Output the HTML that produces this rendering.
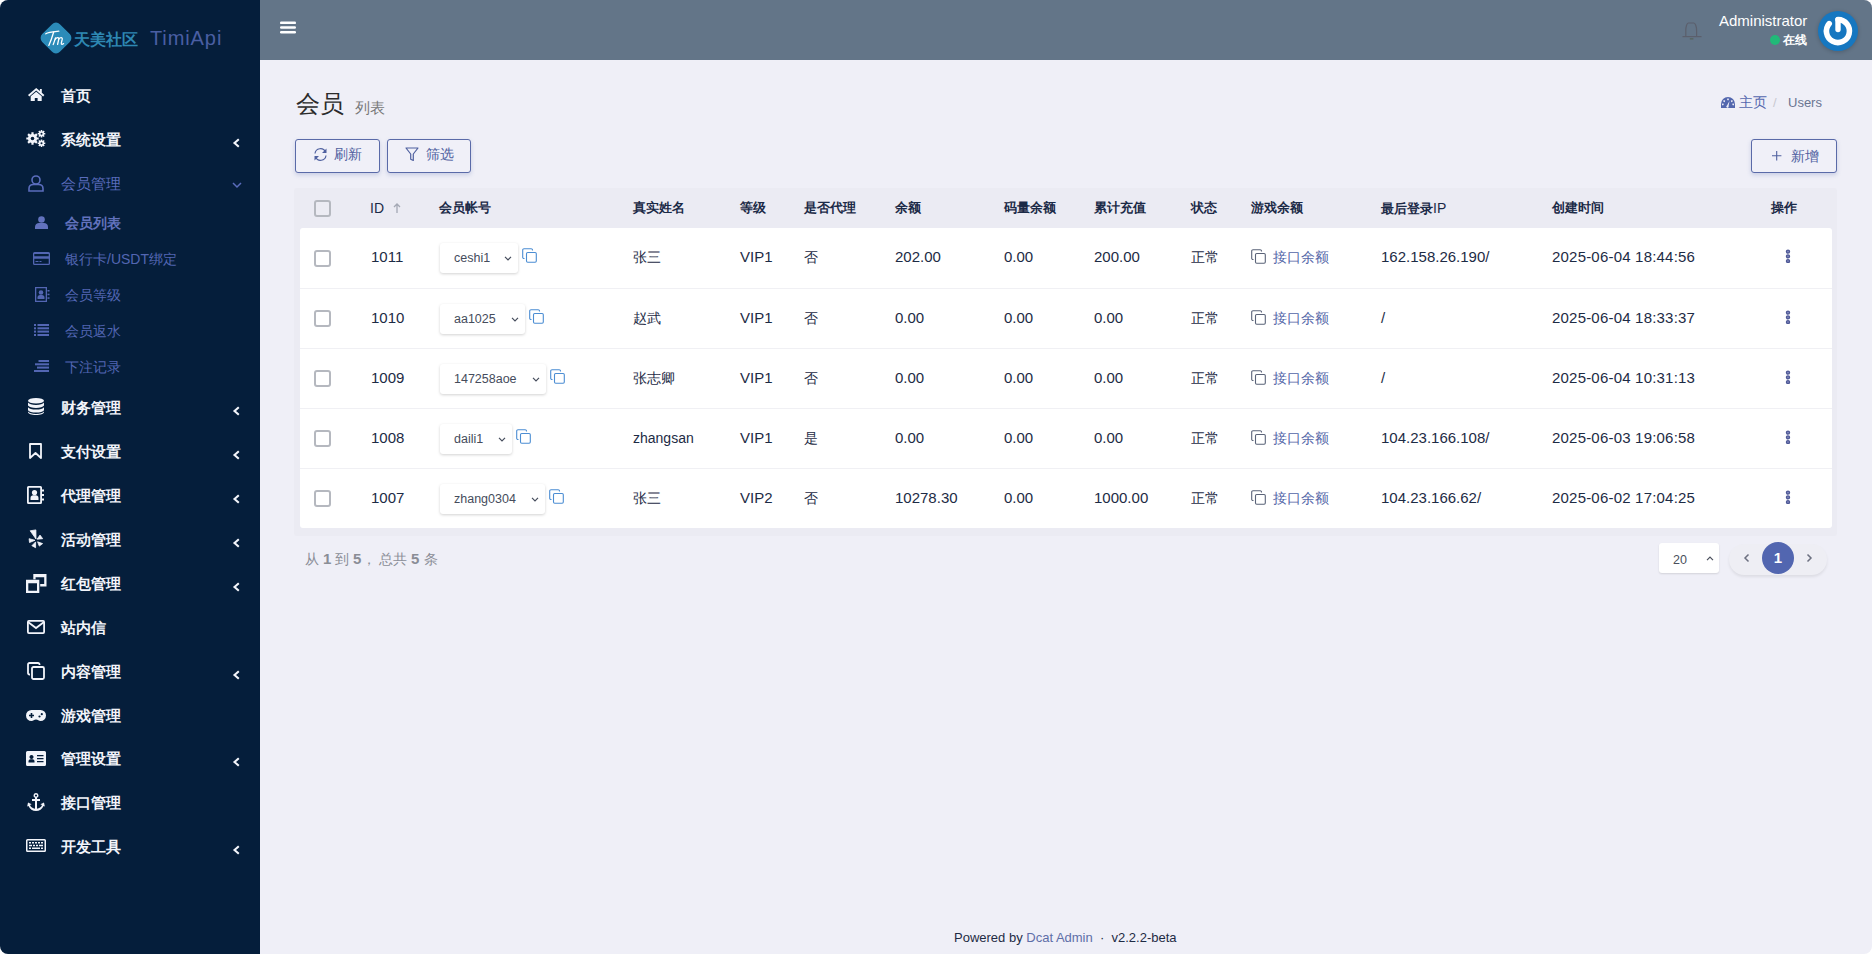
<!DOCTYPE html>
<html><head><meta charset="utf-8">
<style>
*{box-sizing:border-box;margin:0;padding:0}
html,body{width:1872px;height:954px;overflow:hidden;background:#fff}
body{font-family:"Liberation Sans",sans-serif;position:relative}
#win{position:absolute;left:0;top:0;width:1872px;height:954px;border-radius:8px;overflow:hidden;background:#efeff7}
#side{position:absolute;left:0;top:0;width:260px;height:954px;background:#051e3b}
#hdr{position:absolute;left:260px;top:0;width:1612px;height:60px;background:#637588}
.a{position:absolute;white-space:nowrap}
svg.a{overflow:visible}
.mi{position:absolute;left:0;width:260px;height:44px;color:#f2f4fa;font-size:15px;font-weight:700}
.mi .t{position:absolute;left:61px;top:1px;line-height:44px}
.mi svg{position:absolute;overflow:visible}
.mi .ar{left:232px;top:21px}
.sub{position:absolute;left:0;width:260px;height:36px;color:#5366b3;font-size:14px;font-weight:400}
.sub .t{position:absolute;left:65px;top:1px;line-height:36px}
.sub svg{position:absolute;overflow:visible}
.btn{position:absolute;height:34px;border:1px solid #5a6aa8;border-radius:3px;box-shadow:0 2px 4px rgba(88,108,177,.25);color:#4f609f;font-size:14px;background:#f0f0f8}
.btn span{position:absolute;top:-1px;line-height:31px}
.btn svg{position:absolute}
#tbl{position:absolute;left:294px;top:188px;width:1543px;height:348px;background:#ebebf3;border-radius:3px}
.th{position:absolute;top:200px;font-size:13px;line-height:16px;color:#1b2a47;font-weight:bold}
.row{position:absolute;left:300px;width:1532px;height:60px;background:#fff;border-top:1px solid #f0f0f4}
.c{position:absolute;font-size:14px;line-height:18px;color:#1d2b45;white-space:nowrap;top:20px}
.n{font-size:15px;top:20px}
.cb{position:absolute;left:14px;top:21px;width:17px;height:17px;border:2px solid #b5b8bf;border-radius:3px;background:#fff}
.sel{position:absolute;left:140px;top:15px;height:30px;border-radius:3px;background:#fff;box-shadow:0 1px 3px rgba(0,0,0,.18);font-size:12.5px;color:#454c5c}
.sel span{position:absolute;left:14px;top:7px;line-height:16px}
.sel svg{position:absolute;top:13px}
.cp{position:absolute;top:20px}
.gb{position:absolute;left:951px;top:20px;font-size:14px;color:#5366a8;line-height:18px}
.dots{position:absolute;left:1485px;top:21px}
</style></head><body>
<div id="win">
<div id="side">
  <svg class="a" style="left:40px;top:22px" width="32" height="32" viewBox="0 0 32 32">
    <rect x="3.5" y="3.5" width="25" height="25" rx="5.5" transform="rotate(45 16 16)" fill="#2b8bb9"/>
    <g stroke="#fff" stroke-width="1.3" fill="none" stroke-linecap="round" stroke-linejoin="round"><path d="M5.8 11.8C8.5 9.8 14 9.6 18.8 9.2"/><path d="M13.6 10.2C12.2 15 10.6 19.5 8.8 23.4"/><path d="M13.2 22.6C14.2 20 14.9 17.5 15.6 15.8"/><path d="M15.3 17.2C16.8 15.2 19.2 14.8 18.7 17.3L17.6 22.3"/><path d="M18.6 17.3C20.1 15.2 22.7 14.9 22.2 17.4L21.3 21.2C21.1 22.6 22.2 22.9 23.6 21.6"/></g>
  </svg>
  <div class="a" style="left:74px;top:30px;font-size:16px;line-height:20px;color:#2e88b3;font-weight:700">天美社区</div>
  <div class="a" style="left:150px;top:26px;font-size:20px;line-height:24px;color:#4a5ea3;letter-spacing:0.9px">TimiApi</div>

  <div class="mi" style="top:73px"><svg style="left:28px;top:15px" width="17" height="14" viewBox="0 0 17 14"><path fill="#f2f4fa" d="M8.2 0L0 6.9l1.3 1.5L8.2 2.6l6.9 5.8 1.3-1.5L13.8 4.7V1h-1.9v2.1z M2.7 8.3L8.2 3.8l5.5 4.5V13H9.6V10H6.8V13H2.7z"/></svg><span class="t">首页</span></div>
  <div class="mi" style="top:117px"><svg style="left:26px;top:13px" width="20" height="17" viewBox="0 0 20 17"><g fill="#f2f4fa"><circle cx="6.5" cy="8.5" r="4.6"/><g stroke="#f2f4fa" stroke-width="2.2"><path d="M6.5 2.3v12.4M.3 8.5h12.4M2.1 4.1l8.8 8.8M10.9 4.1l-8.8 8.8"/></g><circle cx="15.5" cy="3.8" r="2.6"/><g stroke="#f2f4fa" stroke-width="1.5"><path d="M15.5 0v7.6M11.7 3.8h7.6M12.8 1.1l5.4 5.4M18.2 1.1l-5.4 5.4"/></g><circle cx="15.5" cy="13.2" r="2.6"/><g stroke="#f2f4fa" stroke-width="1.5"><path d="M15.5 9.4V17M11.7 13.2h7.6M12.8 10.5l5.4 5.4M18.2 10.5l-5.4 5.4"/></g></g><g fill="#051e3b"><circle cx="6.5" cy="8.5" r="1.8"/><circle cx="15.5" cy="3.8" r="1"/><circle cx="15.5" cy="13.2" r="1"/></g></svg><span class="t">系统设置</span><svg class="ar" width="9" height="10" viewBox="0 0 9 10"><path d="M6.8 1.2L2.5 5l4.3 3.8" stroke="#f2f4fa" stroke-width="2.1" fill="none"/></svg></div>
  <div class="mi" style="top:161px;color:#5a6cbc;font-weight:400"><svg style="left:28px;top:14px" width="16" height="17" viewBox="0 0 16 17"><g stroke="#5a6cbc" stroke-width="1.6" fill="none"><circle cx="8" cy="5" r="4"/><path d="M1 16v-2.5C1 11 3 9.5 5.5 9.5h5C13 9.5 15 11 15 13.5V16z"/></g></svg><span class="t">会员管理</span><svg class="ar" style="left:232px;top:21px" width="10" height="7" viewBox="0 0 10 7"><path d="M1 1l4 4 4-4" stroke="#5a6cbc" stroke-width="1.5" fill="none"/></svg></div>
  <div class="sub" style="top:204px;color:#6272bd;font-weight:700"><svg style="left:35px;top:12px" width="13" height="13" viewBox="0 0 13 13"><g fill="#6272bd"><circle cx="6.5" cy="3.5" r="3.3"/><path d="M0 13v-2c0-2.5 2-4 4-4h5c2 0 4 1.5 4 4v2z"/></g></svg><span class="t">会员列表</span></div>
  <div class="sub" style="top:240px"><svg style="left:33px;top:12px" width="17" height="13" viewBox="0 0 17 13"><g fill="#5366b3"><path d="M1.5 0h14A1.5 1.5 0 0 1 17 1.5v10A1.5 1.5 0 0 1 15.5 13h-14A1.5 1.5 0 0 1 0 11.5v-10A1.5 1.5 0 0 1 1.5 0zM1.3 2v2.2h14.4V2zm0 4.8v4.9h14.4V6.8zM2.5 9h3v1h-3zm4 0h2v1h-2z"/></g></svg><span class="t">银行卡/USDT绑定</span></div>
  <div class="sub" style="top:276px"><svg style="left:34px;top:11px" width="16" height="15" viewBox="0 0 16 15"><g fill="#5366b3"><path d="M1 0h12v15H1zm1.3 1.3v12.4h9.4V1.3z"/><circle cx="7" cy="5.5" r="2.3"/><path d="M3.5 12v-1.5c0-1.5 1-2.5 2.5-2.5h2c1.5 0 2.5 1 2.5 2.5V12z"/><rect x="13.5" y="3" width="2" height="1.5"/><rect x="13.5" y="6.7" width="2" height="1.5"/><rect x="13.5" y="10.3" width="2" height="1.5"/></g></svg><span class="t">会员等级</span></div>
  <div class="sub" style="top:312px"><svg style="left:34px;top:12px" width="15" height="12" viewBox="0 0 15 12"><g fill="#5366b3"><rect x="0" y="0" width="2" height="2"/><rect x="3.5" y="0" width="11.5" height="2"/><rect x="0" y="3.3" width="2" height="2"/><rect x="3.5" y="3.3" width="11.5" height="2"/><rect x="0" y="6.6" width="2" height="2"/><rect x="3.5" y="6.6" width="11.5" height="2"/><rect x="0" y="10" width="2" height="2"/><rect x="3.5" y="10" width="11.5" height="2"/></g></svg><span class="t">会员返水</span></div>
  <div class="sub" style="top:348px"><svg style="left:34px;top:12px" width="15" height="12" viewBox="0 0 15 12"><g fill="#5366b3"><rect x="4.5" y="0" width="10.5" height="2"/><rect x="1" y="3.3" width="14" height="2"/><rect x="3" y="6.6" width="12" height="2"/><rect x="0" y="10" width="15" height="2"/></g></svg><span class="t">下注记录</span></div>
  <div class="mi" style="top:385px"><svg style="left:28px;top:13px" width="16" height="17" viewBox="0 0 16 17"><g fill="#f2f4fa"><ellipse cx="8" cy="2.8" rx="8" ry="2.8"/><path d="M0 4.6c1 1.6 4 2.4 8 2.4s7-.8 8-2.4v3c-1 1.6-4 2.4-8 2.4S1 9.2 0 7.6z"/><path d="M0 9.2c1 1.6 4 2.4 8 2.4s7-.8 8-2.4v3c-1 1.6-4 2.4-8 2.4S1 13.8 0 12.2z"/><path d="M0 13.6c1 1.6 4 2.4 8 2.4s7-.8 8-2.4v.6c0 1.6-3.6 2.8-8 2.8S0 15.8 0 14.2z"/></g></svg><span class="t">财务管理</span><svg class="ar" width="9" height="10" viewBox="0 0 9 10"><path d="M6.8 1.2L2.5 5l4.3 3.8" stroke="#f2f4fa" stroke-width="2.1" fill="none"/></svg></div>
  <div class="mi" style="top:429px"><svg style="left:29px;top:14px" width="13" height="16" viewBox="0 0 13 16"><path d="M1 1h11v14l-5.5-5L1 15z" stroke="#f2f4fa" stroke-width="1.8" fill="none" stroke-linejoin="round"/></svg><span class="t">支付设置</span><svg class="ar" width="9" height="10" viewBox="0 0 9 10"><path d="M6.8 1.2L2.5 5l4.3 3.8" stroke="#f2f4fa" stroke-width="2.1" fill="none"/></svg></div>
  <div class="mi" style="top:473px"><svg style="left:27px;top:13px" width="17" height="18" viewBox="0 0 17 18"><g fill="#f2f4fa"><path d="M1.5 0h12A1.5 1.5 0 0 1 15 1.5v15a1.5 1.5 0 0 1-1.5 1.5h-12A1.5 1.5 0 0 1 0 16.5v-15A1.5 1.5 0 0 1 1.5 0zm.3 1.8v14.4h11.4V1.8z"/><circle cx="7.5" cy="6.5" r="2.6"/><path d="M3.5 14v-2c0-1.6 1.2-2.7 2.8-2.7h2.4c1.6 0 2.8 1.1 2.8 2.7v2z"/><rect x="15" y="3.5" width="2" height="2"/><rect x="15" y="8" width="2" height="2"/><rect x="15" y="12.5" width="2" height="2"/></g></svg><span class="t">代理管理</span><svg class="ar" width="9" height="10" viewBox="0 0 9 10"><path d="M6.8 1.2L2.5 5l4.3 3.8" stroke="#f2f4fa" stroke-width="2.1" fill="none"/></svg></div>
  <div class="mi" style="top:517px"><svg style="left:24px;top:9px" width="26" height="26" viewBox="0 0 26 26"><g fill="#f2f4fa" stroke="#f2f4fa" stroke-width="0.8" stroke-linejoin="round"><path d="M6.2 4.8L11.9 3.9 12 13z"/><path d="M13.1 13.2L16 9.1 18.7 12.7z"/><path d="M11 14.3L5.1 12.7 5.5 16.5z"/><path d="M11.6 15.9L7.9 19.7 11.6 21.7z"/><path d="M13.6 15.8L18.6 17.6 15.3 20.1z"/></g></svg><span class="t">活动管理</span><svg class="ar" width="9" height="10" viewBox="0 0 9 10"><path d="M6.8 1.2L2.5 5l4.3 3.8" stroke="#f2f4fa" stroke-width="2.1" fill="none"/></svg></div>
  <div class="mi" style="top:561px"><svg style="left:26px;top:13px" width="21" height="19" viewBox="0 0 21 19"><path fill="#f2f4fa" fill-rule="evenodd" d="M7.3 0h13.2v12.5H14.2v-2.4h4V3.2H9.6v2.1H7.3z M0 5.8h13.3V19H0z M2.3 9.3h8.7v7.4H2.3z"/></svg><span class="t">红包管理</span><svg class="ar" width="9" height="10" viewBox="0 0 9 10"><path d="M6.8 1.2L2.5 5l4.3 3.8" stroke="#f2f4fa" stroke-width="2.1" fill="none"/></svg></div>
  <div class="mi" style="top:605px"><svg style="left:27px;top:15px" width="18" height="14" viewBox="0 0 18 14"><g stroke="#f2f4fa" stroke-width="1.8" fill="none"><rect x="0.9" y="0.9" width="16.2" height="12.2" rx="1"/><path d="M1 2l8 6 8-6"/></g></svg><span class="t">站内信</span></div>
  <div class="mi" style="top:649px"><svg style="left:27px;top:13px" width="18" height="18" viewBox="0 0 18 18"><g stroke="#f2f4fa" stroke-width="1.8" fill="none"><rect x="5" y="5" width="12" height="12" rx="1.5"/><path d="M3 12.5H2.5A1.5 1.5 0 0 1 1 11V2.5A1.5 1.5 0 0 1 2.5 1H11a1.5 1.5 0 0 1 1.5 1.5V3"/></g></svg><span class="t">内容管理</span><svg class="ar" width="9" height="10" viewBox="0 0 9 10"><path d="M6.8 1.2L2.5 5l4.3 3.8" stroke="#f2f4fa" stroke-width="2.1" fill="none"/></svg></div>
  <div class="mi" style="top:693px"><svg style="left:26px;top:17px" width="20" height="12" viewBox="0 0 20 12"><path fill="#f2f4fa" d="M5.5 0h9a5.5 5.5 0 0 1 0 11c-1.8 0-2.6-1.4-4.5-1.4S7.3 11 5.5 11a5.5 5.5 0 0 1 0-11zM3 4.7v1.6h1.7V8h1.6V6.3H8V4.7H6.3V3H4.7v1.7z"/><g fill="#051e3b"><circle cx="13.5" cy="6.5" r="1.1"/><circle cx="15.8" cy="4.2" r="1.1"/></g></svg><span class="t">游戏管理</span></div>
  <div class="mi" style="top:736px"><svg style="left:26px;top:15px" width="20" height="15" viewBox="0 0 20 15"><path fill="#f2f4fa" d="M1.5 0h17A1.5 1.5 0 0 1 20 1.5v12a1.5 1.5 0 0 1-1.5 1.5h-17A1.5 1.5 0 0 1 0 13.5v-12A1.5 1.5 0 0 1 1.5 0zM5.5 4a2 2 0 1 0 .01 0zM2.5 11.5h6v-1.3c0-1.2-1-2-2-2h-2c-1 0-2 .8-2 2zM11 4v1.3h6.5V4zm0 3v1.3h6.5V7zm0 3v1.3h6.5V10z"/></svg><span class="t">管理设置</span><svg class="ar" width="9" height="10" viewBox="0 0 9 10"><path d="M6.8 1.2L2.5 5l4.3 3.8" stroke="#f2f4fa" stroke-width="2.1" fill="none"/></svg></div>
  <div class="mi" style="top:780px"><svg style="left:27px;top:13px" width="18" height="18" viewBox="0 0 18 18"><g fill="#f2f4fa"><path d="M9 0a2.5 2.5 0 0 1 1 4.8V6h3v2h-3v7.8c2.2-.3 4.3-1.7 5-3.8l-1.6-.8L17 9.5l.8 4-1.3-.6C15.3 15.9 12.3 18 9 18s-6.3-2.1-7.5-5.1L.2 13.5l.8-4 3.6 1.7-1.6.8c.7 2.1 2.8 3.5 5 3.8V8H5V6h3V4.8A2.5 2.5 0 0 1 9 0zm0 1.4a1.1 1.1 0 1 0 .01 0z"/></g></svg><span class="t">接口管理</span></div>
  <div class="mi" style="top:824px"><svg style="left:26px;top:15px" width="20" height="13" viewBox="0 0 20 13"><path fill="#f2f4fa" d="M1.5 0h17A1.5 1.5 0 0 1 20 1.5v10a1.5 1.5 0 0 1-1.5 1.5h-17A1.5 1.5 0 0 1 0 11.5v-10A1.5 1.5 0 0 1 1.5 0zM1.5 1.5v10h17v-10zM3 3h2v1.6H3zm3 0h2v1.6H6zm3 0h2v1.6H9zm3 0h2v1.6h-2zm3 0h2v1.6h-2zM3 5.7h3v1.6H3zm4 0h2v1.6H7zm3 0h2v1.6h-2zm3 0h4v1.6h-4zM3 8.4h2V10H3zm3 0h8V10H6zm9 0h2V10h-2z"/></svg><span class="t">开发工具</span><svg class="ar" width="9" height="10" viewBox="0 0 9 10"><path d="M6.8 1.2L2.5 5l4.3 3.8" stroke="#f2f4fa" stroke-width="2.1" fill="none"/></svg></div>
</div>

<div id="hdr">
  <svg class="a" style="left:20px;top:21px" width="16" height="13" viewBox="0 0 16 13"><g fill="#fff"><rect x="0" y="0.5" width="16" height="2.6" rx="1.2"/><rect x="0" y="5.2" width="16" height="2.6" rx="1.2"/><rect x="0" y="9.9" width="16" height="2.6" rx="1.2"/></g></svg>
  <svg class="a" style="left:1422px;top:22px" width="20" height="20" viewBox="0 0 20 20"><g stroke="#5b5f6c" stroke-width="1.2" fill="none"><path d="M3.8 14.5V8.5C3.8 4.5 5 1 6.3 1H11.9C13.2 1 14.6 4.5 14.6 8.5V14.5"/><path d="M0.5 14.6h19"/></g><path d="M7.8 16.2h3.6v1.3H7.8z" fill="#56645c"/></svg>
  <div class="a" style="left:1459px;top:12px;font-size:15px;line-height:18px;color:#fff">Administrator</div>
  <div class="a" style="left:1510px;top:35px;width:10px;height:10px;border-radius:50%;background:#21b978"></div>
  <div class="a" style="left:1523px;top:32px;font-size:12px;line-height:17px;color:#fff;font-weight:bold">在线</div>
  <div class="a" style="left:1558px;top:11px;width:40px;height:40px;border-radius:50%;background:#1677c0;box-shadow:0 1px 4px rgba(0,0,0,.2)"></div>
  <svg class="a" style="left:1558px;top:10px" width="40" height="40" viewBox="0 0 40 40"><path d="M11.2 13.6A11.5 11.5 0 1 0 20 9.6" stroke="#fff" stroke-width="5.6" fill="none" stroke-linecap="round"/><path d="M20 9.6v10" stroke="#fff" stroke-width="5.4" stroke-linecap="round"/></svg>
</div>

<!-- content -->
<div class="a" style="left:296px;top:89px;font-size:24px;line-height:30px;color:#2b2b2b">会员</div>
<div class="a" style="left:355px;top:99px;font-size:15px;line-height:18px;color:#777">列表</div>

<svg class="a" style="left:1721px;top:97px" width="14" height="11" viewBox="0 0 14 11"><path fill="#5367ae" d="M7 0a7 7 0 0 1 7 7v4H0V7a7 7 0 0 1 7-7zM7 1.5a.9.9 0 1 0 .01 0zM3.2 3.2a.9.9 0 1 0 .01 0zM10.8 3.2a.9.9 0 1 0 .01 0zM1.8 6.5a.9.9 0 1 0 .01 0zM12.2 6.5a.9.9 0 1 0 .01 0zM8.5 4L6 8.5a1.2 1.2 0 1 0 1.6.6z" fill-rule="evenodd"/></svg>
<div class="a" style="left:1739px;top:94px;font-size:14px;line-height:17px;color:#5367ae">主页</div>
<div class="a" style="left:1773px;top:94px;font-size:13px;line-height:17px;color:#c8c8d0">/</div>
<div class="a" style="left:1788px;top:94px;font-size:13px;line-height:17px;color:#6a7591">Users</div>

<div class="btn" style="left:295px;top:139px;width:85px"><svg style="left:17px;top:7px" width="15" height="15" viewBox="0 0 15 15"><g stroke="#4f609f" stroke-width="1.2" fill="none"><path d="M2 6.5A5.5 5.5 0 0 1 12.5 5"/><path d="M13 8.5A5.5 5.5 0 0 1 2.5 10"/></g><g fill="#4f609f"><path d="M13.5 1.5v4.5H9z"/><path d="M1.5 13.5V9H6z"/></g></svg><span style="left:38px">刷新</span></div>
<div class="btn" style="left:387px;top:139px;width:84px"><svg style="left:17px;top:7px" width="14" height="15" viewBox="0 0 14 15"><path d="M1 1h12L8.3 7v6.5l-2.6-1.3V7z" stroke="#4f609f" stroke-width="1.2" fill="none" stroke-linejoin="round"/></svg><span style="left:38px">筛选</span></div>
<div class="btn" style="left:1751px;top:139px;width:86px"><svg style="left:20px;top:11px" width="10" height="10" viewBox="0 0 10 10"><path d="M4.7 0v9.4M0 4.7h9.4" stroke="#4f609f" stroke-width="1.1"/></svg><span style="left:39px;top:1px">新增</span></div>

<div id="tbl"></div>
<div class="a" style="left:314px;top:200px;width:17px;height:17px;border:2px solid #b5b8bf;border-radius:3px;background:#ececf3"></div>
<div class="th" style="left:370px;font-weight:normal;font-size:14px">ID</div>
<svg class="a" style="left:393px;top:203px" width="8" height="10" viewBox="0 0 8 10"><path d="M4 10V1M1 4l3-3 3 3" stroke="#a4a8b4" stroke-width="1.3" fill="none"/></svg>
<div class="th" style="left:439px">会员帐号</div>
<div class="th" style="left:633px">真实姓名</div>
<div class="th" style="left:740px">等级</div>
<div class="th" style="left:804px">是否代理</div>
<div class="th" style="left:895px">余额</div>
<div class="th" style="left:1004px">码量余额</div>
<div class="th" style="left:1094px">累计充值</div>
<div class="th" style="left:1191px">状态</div>
<div class="th" style="left:1251px">游戏余额</div>
<div class="th" style="left:1381px">最后登录<span style="font-weight:normal;font-size:14px">IP</span></div>
<div class="th" style="left:1552px">创建时间</div>
<div class="th" style="left:1771px">操作</div>

<div class="row" style="top:228px;border-top:none;border-radius:3px 3px 0 0">
<div class="cb" style="top:22px"></div>
<div class="c n" style="left:71px">1011</div>
<div class="sel" style="width:78px"><span>ceshi1</span><svg style="left:64px" width="8" height="5" viewBox="0 0 8 5"><path d="M1 .8l3 3 3-3" stroke="#454c5c" stroke-width="1.2" fill="none"/></svg></div>
<svg class="cp" style="left:222px" width="15" height="15" viewBox="0 0 15 15"><g stroke="#4b8dd3" stroke-width="1.1" fill="none"><rect x="4.5" y="4.5" width="9.8" height="9.8" rx="1.2"/><path d="M2.5 10.5h-.5A1.3 1.3 0 0 1 .7 9.2V2A1.3 1.3 0 0 1 2 .7h7.2a1.3 1.3 0 0 1 1.3 1.3v.5"/></g></svg>
<div class="c" style="left:333px">张三</div>
<div class="c n" style="left:440px">VIP1</div>
<div class="c" style="left:504px">否</div>
<div class="c n" style="left:595px">202.00</div>
<div class="c n" style="left:704px">0.00</div>
<div class="c n" style="left:794px">200.00</div>
<div class="c" style="left:891px">正常</div>
<svg class="cp" style="left:951px;top:21px" width="15" height="15" viewBox="0 0 15 15"><g stroke="#5a6378" stroke-width="1.1" fill="none"><rect x="4.5" y="4.5" width="9.8" height="9.8" rx="1.2"/><path d="M2.5 10.5h-.5A1.3 1.3 0 0 1 .7 9.2V2A1.3 1.3 0 0 1 2 .7h7.2a1.3 1.3 0 0 1 1.3 1.3v.5"/></g></svg>
<div class="gb" style="left:973px">接口余额</div>
<div class="c n" style="left:1081px">162.158.26.190/</div>
<div class="c n" style="left:1252px;letter-spacing:0.2px">2025-06-04 18:44:56</div>
<svg class="dots" width="6" height="14" viewBox="0 0 6 14"><g fill="#8a92c4" stroke="#4e5896" stroke-width="1.4"><circle cx="3" cy="2.6" r="1.5"/><circle cx="3" cy="7.35" r="1.5"/><circle cx="3" cy="12.1" r="1.5"/></g></svg>
</div>
<div class="row" style="top:288px">
<div class="cb"></div>
<div class="c n" style="left:71px">1010</div>
<div class="sel" style="width:85px"><span>aa1025</span><svg style="left:71px" width="8" height="5" viewBox="0 0 8 5"><path d="M1 .8l3 3 3-3" stroke="#454c5c" stroke-width="1.2" fill="none"/></svg></div>
<svg class="cp" style="left:229px" width="15" height="15" viewBox="0 0 15 15"><g stroke="#4b8dd3" stroke-width="1.1" fill="none"><rect x="4.5" y="4.5" width="9.8" height="9.8" rx="1.2"/><path d="M2.5 10.5h-.5A1.3 1.3 0 0 1 .7 9.2V2A1.3 1.3 0 0 1 2 .7h7.2a1.3 1.3 0 0 1 1.3 1.3v.5"/></g></svg>
<div class="c" style="left:333px">赵武</div>
<div class="c n" style="left:440px">VIP1</div>
<div class="c" style="left:504px">否</div>
<div class="c n" style="left:595px">0.00</div>
<div class="c n" style="left:704px">0.00</div>
<div class="c n" style="left:794px">0.00</div>
<div class="c" style="left:891px">正常</div>
<svg class="cp" style="left:951px;top:21px" width="15" height="15" viewBox="0 0 15 15"><g stroke="#5a6378" stroke-width="1.1" fill="none"><rect x="4.5" y="4.5" width="9.8" height="9.8" rx="1.2"/><path d="M2.5 10.5h-.5A1.3 1.3 0 0 1 .7 9.2V2A1.3 1.3 0 0 1 2 .7h7.2a1.3 1.3 0 0 1 1.3 1.3v.5"/></g></svg>
<div class="gb" style="left:973px">接口余额</div>
<div class="c n" style="left:1081px">/</div>
<div class="c n" style="left:1252px;letter-spacing:0.2px">2025-06-04 18:33:37</div>
<svg class="dots" width="6" height="14" viewBox="0 0 6 14"><g fill="#8a92c4" stroke="#4e5896" stroke-width="1.4"><circle cx="3" cy="2.6" r="1.5"/><circle cx="3" cy="7.35" r="1.5"/><circle cx="3" cy="12.1" r="1.5"/></g></svg>
</div>
<div class="row" style="top:348px">
<div class="cb"></div>
<div class="c n" style="left:71px">1009</div>
<div class="sel" style="width:106px"><span>147258aoe</span><svg style="left:92px" width="8" height="5" viewBox="0 0 8 5"><path d="M1 .8l3 3 3-3" stroke="#454c5c" stroke-width="1.2" fill="none"/></svg></div>
<svg class="cp" style="left:250px" width="15" height="15" viewBox="0 0 15 15"><g stroke="#4b8dd3" stroke-width="1.1" fill="none"><rect x="4.5" y="4.5" width="9.8" height="9.8" rx="1.2"/><path d="M2.5 10.5h-.5A1.3 1.3 0 0 1 .7 9.2V2A1.3 1.3 0 0 1 2 .7h7.2a1.3 1.3 0 0 1 1.3 1.3v.5"/></g></svg>
<div class="c" style="left:333px">张志卿</div>
<div class="c n" style="left:440px">VIP1</div>
<div class="c" style="left:504px">否</div>
<div class="c n" style="left:595px">0.00</div>
<div class="c n" style="left:704px">0.00</div>
<div class="c n" style="left:794px">0.00</div>
<div class="c" style="left:891px">正常</div>
<svg class="cp" style="left:951px;top:21px" width="15" height="15" viewBox="0 0 15 15"><g stroke="#5a6378" stroke-width="1.1" fill="none"><rect x="4.5" y="4.5" width="9.8" height="9.8" rx="1.2"/><path d="M2.5 10.5h-.5A1.3 1.3 0 0 1 .7 9.2V2A1.3 1.3 0 0 1 2 .7h7.2a1.3 1.3 0 0 1 1.3 1.3v.5"/></g></svg>
<div class="gb" style="left:973px">接口余额</div>
<div class="c n" style="left:1081px">/</div>
<div class="c n" style="left:1252px;letter-spacing:0.2px">2025-06-04 10:31:13</div>
<svg class="dots" width="6" height="14" viewBox="0 0 6 14"><g fill="#8a92c4" stroke="#4e5896" stroke-width="1.4"><circle cx="3" cy="2.6" r="1.5"/><circle cx="3" cy="7.35" r="1.5"/><circle cx="3" cy="12.1" r="1.5"/></g></svg>
</div>
<div class="row" style="top:408px">
<div class="cb"></div>
<div class="c n" style="left:71px">1008</div>
<div class="sel" style="width:72px"><span>daili1</span><svg style="left:58px" width="8" height="5" viewBox="0 0 8 5"><path d="M1 .8l3 3 3-3" stroke="#454c5c" stroke-width="1.2" fill="none"/></svg></div>
<svg class="cp" style="left:216px" width="15" height="15" viewBox="0 0 15 15"><g stroke="#4b8dd3" stroke-width="1.1" fill="none"><rect x="4.5" y="4.5" width="9.8" height="9.8" rx="1.2"/><path d="M2.5 10.5h-.5A1.3 1.3 0 0 1 .7 9.2V2A1.3 1.3 0 0 1 2 .7h7.2a1.3 1.3 0 0 1 1.3 1.3v.5"/></g></svg>
<div class="c" style="left:333px">zhangsan</div>
<div class="c n" style="left:440px">VIP1</div>
<div class="c" style="left:504px">是</div>
<div class="c n" style="left:595px">0.00</div>
<div class="c n" style="left:704px">0.00</div>
<div class="c n" style="left:794px">0.00</div>
<div class="c" style="left:891px">正常</div>
<svg class="cp" style="left:951px;top:21px" width="15" height="15" viewBox="0 0 15 15"><g stroke="#5a6378" stroke-width="1.1" fill="none"><rect x="4.5" y="4.5" width="9.8" height="9.8" rx="1.2"/><path d="M2.5 10.5h-.5A1.3 1.3 0 0 1 .7 9.2V2A1.3 1.3 0 0 1 2 .7h7.2a1.3 1.3 0 0 1 1.3 1.3v.5"/></g></svg>
<div class="gb" style="left:973px">接口余额</div>
<div class="c n" style="left:1081px">104.23.166.108/</div>
<div class="c n" style="left:1252px;letter-spacing:0.2px">2025-06-03 19:06:58</div>
<svg class="dots" width="6" height="14" viewBox="0 0 6 14"><g fill="#8a92c4" stroke="#4e5896" stroke-width="1.4"><circle cx="3" cy="2.6" r="1.5"/><circle cx="3" cy="7.35" r="1.5"/><circle cx="3" cy="12.1" r="1.5"/></g></svg>
</div>
<div class="row" style="top:468px;border-radius:0 0 3px 3px">
<div class="cb"></div>
<div class="c n" style="left:71px">1007</div>
<div class="sel" style="width:105px"><span>zhang0304</span><svg style="left:91px" width="8" height="5" viewBox="0 0 8 5"><path d="M1 .8l3 3 3-3" stroke="#454c5c" stroke-width="1.2" fill="none"/></svg></div>
<svg class="cp" style="left:249px" width="15" height="15" viewBox="0 0 15 15"><g stroke="#4b8dd3" stroke-width="1.1" fill="none"><rect x="4.5" y="4.5" width="9.8" height="9.8" rx="1.2"/><path d="M2.5 10.5h-.5A1.3 1.3 0 0 1 .7 9.2V2A1.3 1.3 0 0 1 2 .7h7.2a1.3 1.3 0 0 1 1.3 1.3v.5"/></g></svg>
<div class="c" style="left:333px">张三</div>
<div class="c n" style="left:440px">VIP2</div>
<div class="c" style="left:504px">否</div>
<div class="c n" style="left:595px">10278.30</div>
<div class="c n" style="left:704px">0.00</div>
<div class="c n" style="left:794px">1000.00</div>
<div class="c" style="left:891px">正常</div>
<svg class="cp" style="left:951px;top:21px" width="15" height="15" viewBox="0 0 15 15"><g stroke="#5a6378" stroke-width="1.1" fill="none"><rect x="4.5" y="4.5" width="9.8" height="9.8" rx="1.2"/><path d="M2.5 10.5h-.5A1.3 1.3 0 0 1 .7 9.2V2A1.3 1.3 0 0 1 2 .7h7.2a1.3 1.3 0 0 1 1.3 1.3v.5"/></g></svg>
<div class="gb" style="left:973px">接口余额</div>
<div class="c n" style="left:1081px">104.23.166.62/</div>
<div class="c n" style="left:1252px;letter-spacing:0.2px">2025-06-02 17:04:25</div>
<svg class="dots" width="6" height="14" viewBox="0 0 6 14"><g fill="#8a92c4" stroke="#4e5896" stroke-width="1.4"><circle cx="3" cy="2.6" r="1.5"/><circle cx="3" cy="7.35" r="1.5"/><circle cx="3" cy="12.1" r="1.5"/></g></svg>
</div>
<div class="a" style="left:0;top:550px;font-size:14px;line-height:18px;color:#8a8d96"><span class="a" style="left:305px">从</span><b class="a" style="left:323px;font-size:15px">1</b><span class="a" style="left:335px">到</span><b class="a" style="left:353px;font-size:15px">5</b><span class="a" style="left:362px">，</span><span class="a" style="left:379px">总共</span><b class="a" style="left:411px;font-size:15px">5</b><span class="a" style="left:424px">条</span></div>
<div class="a" style="left:1659px;top:543px;width:60px;height:30px;background:#fff;border-radius:3px;box-shadow:0 1px 2px rgba(0,0,0,.12)"><span class="a" style="left:14px;top:10px;font-size:12.5px;line-height:15px;color:#4a4f5c">20</span><svg class="a" style="left:47px;top:13px" width="8" height="5" viewBox="0 0 8 5"><path d="M1 4.2l3-3 3 3" stroke="#4a4f5c" stroke-width="1.2" fill="none"/></svg></div>
<div class="a" style="left:1729px;top:544px;width:98px;height:31px;background:#eeeef4;border-radius:16px;box-shadow:0 2px 3px rgba(0,0,0,.08)"></div>
<svg class="a" style="left:1743px;top:553px" width="7" height="10" viewBox="0 0 7 10"><path d="M5.5 1.5L2 5l3.5 3.5" stroke="#6c7080" stroke-width="1.5" fill="none"/></svg>
<div class="a" style="left:1762px;top:542px;width:32px;height:32px;border-radius:50%;background:#5266b0;color:#fff;font-size:15px;line-height:32px;text-align:center;font-weight:bold">1</div>
<svg class="a" style="left:1806px;top:553px" width="7" height="10" viewBox="0 0 7 10"><path d="M1.5 1.5L5 5 1.5 8.5" stroke="#6c7080" stroke-width="1.5" fill="none"/></svg>
<div class="a" style="left:954px;top:929px;font-size:13px;line-height:17px;color:#1e2b44">Powered by <span style="color:#5e6ea8">Dcat Admin</span> &nbsp;·&nbsp; v2.2.2-beta</div>
</div>
</body></html>
